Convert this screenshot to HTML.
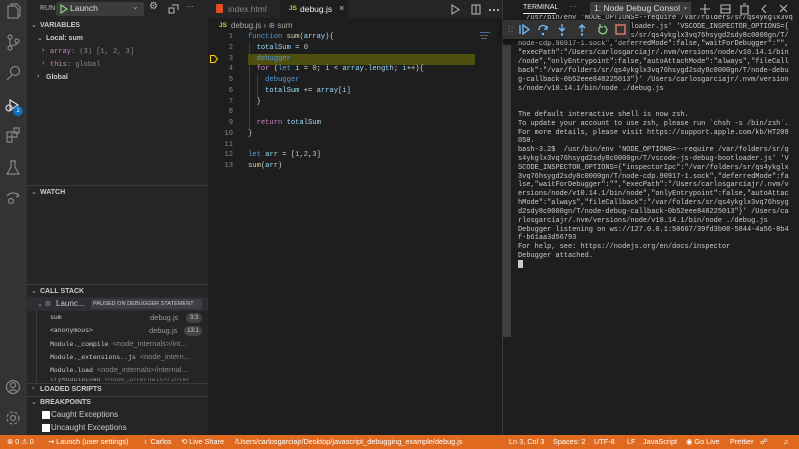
<!DOCTYPE html>
<html><head><meta charset="utf-8">
<style>
*{margin:0;padding:0;box-sizing:border-box}
body{width:799px;height:449px;overflow:hidden;background:#1e1e1e;font-family:"Liberation Sans",sans-serif;color:#ccc;position:relative}
.a{position:absolute;white-space:pre}
.mono{font-family:"Liberation Mono",monospace}
.ico{position:absolute}
.sb span{position:absolute;top:0;white-space:pre}
</style></head><body>
<!-- activity bar -->
<div class="a" style="left:0;top:0;width:27px;height:435px;background:#333"></div>
<svg class="ico" style="left:0;top:0" width="27" height="435" fill="none" stroke="#858585" stroke-width="1.2">
<path d="M8 6h7l3 3v9H8z M11 6V4h6l3 3v9h-2"/>
<circle cx="10" cy="37" r="2"/><circle cx="10" cy="48" r="2"/><circle cx="17" cy="41" r="2"/><path d="M10 39v7 M17 43c0 3-7 2-7 3"/>
<circle cx="15" cy="71" r="4.5"/><path d="M12 75l-5 5"/>
<path d="M10 100l8 5-8 5z" stroke="#ddd"/><circle cx="9" cy="108" r="3" stroke="#ddd"/>
<path d="M7 132h5v5H7z M12 132h5v5h-5z M7 137h5v5H7z M14 128h5v5h-5z"/>
<path d="M11 161v6l-4 7h12l-4-7v-6 M10 161h6"/>
<path d="M7 196c3-4 9-4 12 0l-2-3 M19 196l-3 1"/><circle cx="11" cy="201" r="2.5"/>
<circle cx="13" cy="387" r="6.5"/><circle cx="13" cy="385" r="2.5"/><path d="M9 392c2-3 6-3 8 0"/>
<circle cx="13" cy="418" r="2.5"/><circle cx="13" cy="418" r="6" stroke-dasharray="3 2"/>
</svg>
<div class="a" style="left:13px;top:106px;width:10px;height:10px;border-radius:5px;background:#0e70c0;color:#fff;font-size:6px;text-align:center;line-height:10px">1</div>

<!-- sidebar -->
<div class="a" style="left:27px;top:0;width:181px;height:435px;background:#252526"></div>
<div class="a" style="left:40px;top:5px;font-size:7px;color:#bbb">RUN</div>
<div class="a" style="left:56px;top:2px;width:88px;height:14px;background:#3c3c3c;border-radius:2px"></div>
<svg class="ico" style="left:59px;top:4px" width="9" height="10"><path d="M2 1l6 4-6 4z" fill="none" stroke="#89d185" stroke-width="1.2"/></svg>
<div class="a" style="left:70px;top:3px;font-size:8.5px;color:#ddd">Launch</div>
<div class="a" style="left:132px;top:2px;font-size:8px;color:#aaa">⌄</div>
<div class="a" style="left:149px;top:1px;font-size:10px;color:#bbb">⚙</div>
<svg class="ico" style="left:168px;top:4px" width="11" height="10" fill="none" stroke="#bbb"><path d="M1 4h5v5H1z M4 1h6v5"/></svg>
<div class="a" style="left:186px;top:2px;font-size:8px;color:#bbb">···</div>

<div class="a" style="left:31px;top:21px;font-size:7px;color:#bbb">⌄</div>
<div class="a" style="left:40px;top:22px;font-size:7px;font-weight:bold;color:#ccc">VARIABLES</div>
<div class="a" style="left:37px;top:34px;font-size:7px;color:#bbb">⌄</div>
<div class="a" style="left:46px;top:35px;font-size:7px;font-weight:bold;color:#ccc">Local: sum</div>
<div class="a" style="left:42px;top:47px;font-size:7px;color:#bbb">›</div>
<div class="a mono" style="left:50px;top:48px;font-size:7px;color:#888"><span style="color:#c586c0">array</span>: (3) [1, 2, 3]</div>
<div class="a" style="left:42px;top:60px;font-size:7px;color:#bbb">›</div>
<div class="a mono" style="left:50px;top:61px;font-size:7px;color:#888"><span style="color:#c586c0">this</span>: global</div>
<div class="a" style="left:37px;top:73px;font-size:7px;color:#bbb">›</div>
<div class="a" style="left:46px;top:74px;font-size:7px;font-weight:bold;color:#ccc">Global</div>

<div class="a" style="left:27px;top:185px;width:181px;height:1px;background:#3a3a3a"></div>
<div class="a" style="left:31px;top:188px;font-size:7px;color:#bbb">⌄</div>
<div class="a" style="left:40px;top:189px;font-size:7px;font-weight:bold;color:#ccc">WATCH</div>

<div class="a" style="left:27px;top:284px;width:181px;height:1px;background:#3a3a3a"></div>
<div class="a" style="left:31px;top:287px;font-size:7px;color:#bbb">⌄</div>
<div class="a" style="left:40px;top:288px;font-size:7px;font-weight:bold;color:#ccc">CALL STACK</div>
<div class="a" style="left:27px;top:297px;width:181px;height:14px;background:#2f2f33"></div>
<div class="a" style="left:37px;top:300px;font-size:7px;color:#999">⌄ ⚙</div>
<div class="a" style="left:56px;top:299px;font-size:8px;color:#ccc">Launc...</div>
<div class="a" style="left:91px;top:299px;width:111px;height:10px;background:#3e3e44;font-size:5.6px;color:#ccc;line-height:10px;padding-left:2px">PAUSED ON DEBUGGER STATEMENT</div>
<div class="a" style="left:36px;top:311px;width:1px;height:72px;background:#3a3a3a"></div>
<div class="a mono" style="left:50px;top:314px;font-size:6.5px;color:#ccc">sum</div>
<div class="a" style="left:150px;top:313px;font-size:7.5px;color:#999">debug.js</div>
<div class="a" style="left:186px;top:313px;width:16px;height:10px;border-radius:5px;background:#444;font-size:6px;line-height:10px;text-align:center;color:#ccc">3:3</div>
<div class="a mono" style="left:50px;top:327px;font-size:6.5px;color:#ccc">&lt;anonymous&gt;</div>
<div class="a" style="left:149px;top:326px;font-size:7.5px;color:#999">debug.js</div>
<div class="a" style="left:184px;top:326px;width:18px;height:10px;border-radius:5px;background:#444;font-size:6px;line-height:10px;text-align:center;color:#ccc">13:1</div>
<div class="a mono" style="left:50px;top:339px;font-size:6.5px;color:#ccc">Module._compile <span style="font-family:'Liberation Sans';font-size:7.5px;color:#888">&lt;node_internals&gt;/int...</span></div>
<div class="a mono" style="left:50px;top:352px;font-size:6.5px;color:#ccc">Module._extensions..js <span style="font-family:'Liberation Sans';font-size:7.5px;color:#888">&lt;node_intern...</span></div>
<div class="a mono" style="left:50px;top:365px;font-size:6.5px;color:#ccc">Module.load <span style="font-family:'Liberation Sans';font-size:7.5px;color:#888">&lt;node_internals&gt;/internal...</span></div>
<div class="a" style="left:27px;top:378px;width:181px;height:5px;overflow:hidden"><div class="a mono" style="left:23px;top:-2px;font-size:6.5px;color:#999">tryModuleLoad <span style="color:#777">&lt;node_internals&gt;/inter</span></div></div>
<div class="a" style="left:27px;top:383px;width:181px;height:1px;background:#3a3a3a"></div>
<div class="a" style="left:32px;top:385px;font-size:7px;color:#bbb">›</div>
<div class="a" style="left:40px;top:386px;font-size:7px;font-weight:bold;color:#ccc">LOADED SCRIPTS</div>
<div class="a" style="left:27px;top:396px;width:181px;height:1px;background:#3a3a3a"></div>
<div class="a" style="left:31px;top:398px;font-size:7px;color:#bbb">⌄</div>
<div class="a" style="left:40px;top:399px;font-size:7px;font-weight:bold;color:#ccc">BREAKPOINTS</div>
<div class="a" style="left:42px;top:411px;width:8px;height:8px;background:#fff"></div>
<div class="a" style="left:51px;top:410px;font-size:8px;color:#ccc">Caught Exceptions</div>
<div class="a" style="left:42px;top:424px;width:8px;height:8px;background:#fff"></div>
<div class="a" style="left:51px;top:423px;font-size:8px;color:#ccc">Uncaught Exceptions</div>

<!-- editor -->
<div class="a" style="left:208px;top:0;width:294px;height:18px;background:#252526"></div>
<div class="a" style="left:280px;top:0;width:68px;height:18px;background:#1e1e1e"></div>
<div class="a" style="left:216px;top:4px;width:7px;height:9px;background:#e44d26;border-radius:1px"></div>
<div class="a" style="left:228px;top:4px;font-size:8.5px;color:#888">index.html</div>
<div class="a" style="left:289px;top:5px;font-size:6.5px;font-weight:bold;color:#cbcb41">JS</div>
<div class="a" style="left:300px;top:4px;font-size:8.5px;color:#eee">debug.js</div>
<div class="a" style="left:339px;top:3px;font-size:9px;color:#ccc">×</div>
<svg class="ico" style="left:450px;top:4px" width="50" height="11" fill="none" stroke="#bbb"><path d="M2 1l7 4.5L2 10z M22 1h8v9h-8z M26 1v9"/><circle cx="40" cy="6" r=".6" fill="#bbb"/><circle cx="44" cy="6" r=".6" fill="#bbb"/><circle cx="48" cy="6" r=".6" fill="#bbb"/></svg>
<div class="a" style="left:219px;top:22px;font-size:6.5px;font-weight:bold;color:#cbcb41">JS</div>
<div class="a" style="left:231px;top:21px;font-size:8px;color:#aaa">debug.js › <span style="color:#b180d7">⊕</span> sum</div>

<div class="a" style="left:248px;top:54px;width:227px;height:11px;background:#4f4f10"></div>
<svg class="ico" style="left:209px;top:54px" width="10" height="10"><path d="M1.5 1.5h4l3 3.5-3 3.5h-4z" fill="none" stroke="#ffcc00" stroke-width="1.1"/></svg>
<div class="a" style="left:249px;top:43px;width:1px;height:86px;background:#404040"></div>
<div class="a" style="left:257px;top:75px;width:1px;height:22px;background:#404040"></div>
<div class="a mono" style="left:214px;top:32px;font-size:7.15px;line-height:10.75px;color:#858585;text-align:right;width:19px">1
2
3
4
5
6
7
8
9
10
11
12
13</div>
<div class="a mono" style="left:248px;top:32px;font-size:7.15px;line-height:10.75px;color:#d4d4d4"><span style="color:#569cd6">function</span> <span style="color:#dcdcaa">sum</span>(<span style="color:#9cdcfe">array</span>){
  <span style="color:#9cdcfe">totalSum</span> = <span style="color:#b5cea8">0</span>
  <span style="color:#569cd6">debugger</span>
  <span style="color:#c586c0">for</span> (<span style="color:#569cd6">let</span> <span style="color:#9cdcfe">i</span> = <span style="color:#b5cea8">0</span>; <span style="color:#9cdcfe">i</span> &lt; <span style="color:#9cdcfe">array</span>.<span style="color:#9cdcfe">length</span>; <span style="color:#9cdcfe">i</span>++){
    <span style="color:#569cd6">debugger</span>
    <span style="color:#9cdcfe">totalSum</span> += <span style="color:#9cdcfe">array</span>[<span style="color:#9cdcfe">i</span>]
  }

  <span style="color:#c586c0">return</span> <span style="color:#9cdcfe">totalSum</span>
}

<span style="color:#569cd6">let</span> <span style="color:#9cdcfe">arr</span> = [<span style="color:#b5cea8">1</span>,<span style="color:#b5cea8">2</span>,<span style="color:#b5cea8">3</span>]
<span style="color:#dcdcaa">sum</span>(<span style="color:#9cdcfe">arr</span>)</div>
<div class="a" style="left:480px;top:32px;width:10px;height:1px;background:#4a6a9a"></div>
<div class="a" style="left:480px;top:35px;width:8px;height:1px;background:#666"></div>
<div class="a" style="left:481px;top:38px;width:6px;height:1px;background:#666"></div>

<!-- terminal -->
<div class="a" style="left:502px;top:0;width:297px;height:435px;background:#1e1e1e;border-left:1px solid #3a3a3a;overflow:hidden">
<div class="a" style="left:0;top:45px;width:8px;height:292px;background:#3f3f3f"></div>
<div class="a mono" style="left:15px;top:14px;font-size:6.95px;line-height:8.82px;color:#ccc">  /usr/bin/env 'NODE_OPTIONS=--require /var/folders/sr/qs4ykglx3vq
00gn/T/vscode-js-debug-bootloader.js' 'VSCODE_INSPECTOR_OPTIONS={
"inspectorIpc":"/var/folders/sr/qs4ykglx3vq76hsygd2sdy8c0000gn/T/
node-cdp.90917-1.sock","deferredMode":false,"waitForDebugger":"",
"execPath":"/Users/carlosgarciajr/.nvm/versions/node/v10.14.1/bin
/node","onlyEntrypoint":false,"autoAttachMode":"always","fileCall
back":"/var/folders/sr/qs4ykglx3vq76hsygd2sdy8c0000gn/T/node-debu
g-callback-0b52eee848225013"}' /Users/carlosgarciajr/.nvm/version
s/node/v10.14.1/bin/node ./debug.js


The default interactive shell is now zsh.
To update your account to use zsh, please run `chsh -s /bin/zsh`.
For more details, please visit https://support.apple.com/kb/HT208
050.
bash-3.2$  /usr/bin/env 'NODE_OPTIONS=--require /var/folders/sr/q
s4ykglx3vq76hsygd2sdy8c0000gn/T/vscode-js-debug-bootloader.js' 'V
SCODE_INSPECTOR_OPTIONS={"inspectorIpc":"/var/folders/sr/qs4ykglx
3vq76hsygd2sdy8c0000gn/T/node-cdp.90917-1.sock","deferredMode":fa
lse,"waitForDebugger":"","execPath":"/Users/carlosgarciajr/.nvm/v
ersions/node/v10.14.1/bin/node","onlyEntrypoint":false,"autoAttac
hMode":"always","fileCallback":"/var/folders/sr/qs4ykglx3vq76hsyg
d2sdy8c0000gn/T/node-debug-callback-0b52eee848225013"}' /Users/ca
rlosgarciajr/.nvm/versions/node/v10.14.1/bin/node ./debug.js
Debugger listening on ws://127.0.0.1:50667/39fd3b08-5844-4a56-8b4
f-b61aa3d56793
For help, see: https://nodejs.org/en/docs/inspector
Debugger attached.</div>
<div class="a" style="left:15px;top:260px;width:5px;height:8px;background:#ccc"></div>
</div>
<div class="a" style="left:503px;top:0;width:296px;height:15px;background:#1e1e1e"></div>
<div class="a" style="left:523px;top:4px;font-size:7px;color:#e7e7e7">TERMINAL</div>
<div class="a" style="left:523px;top:13px;width:33px;height:1px;background:#e7e7e7"></div>
<div class="a" style="left:569px;top:2px;font-size:8px;color:#999">···</div>
<div class="a" style="left:590px;top:2px;width:101px;height:13px;background:#3c3c3c"></div>
<div class="a" style="left:594px;top:3px;font-size:8.5px;color:#ddd;width:86px;overflow:hidden">1: Node Debug Console</div>
<div class="a" style="left:682px;top:2px;font-size:8px;color:#bbb">⌄</div>
<svg class="ico" style="left:700px;top:3px" width="92" height="12" fill="none" stroke="#bbb" stroke-width="1.1"><path d="M5 1v10 M0 6h10 M21 2h9v8h-9z M21 6h9 M41 3h7v8h-7z M40 3h9 M43 1h3 M66 2l-4 4 4 4 M80 2l7 7 M87 2l-7 7"/></svg>

<!-- debug toolbar -->
<div class="a" style="left:502px;top:20px;width:128px;height:19px;background:#333;box-shadow:0 2px 6px rgba(0,0,0,.6)"></div>
<svg class="ico" style="left:502px;top:20px" width="128" height="19" fill="none" stroke-width="1.3">
<path d="M7 6v8 M10 6v8" stroke="#666" stroke-dasharray="1 1.5"/>
<path d="M18 5v9 M21 5l6 4.5-6 4.5z" stroke="#75beff"/>
<path d="M37 10a4 4 0 0 1 8-1 M45 6v3h-3" stroke="#75beff"/><circle cx="41" cy="14" r="1.2" fill="#75beff" stroke="none"/>
<path d="M60 4v7 M57 8l3 3 3-3" stroke="#75beff"/><circle cx="60" cy="14.5" r="1.2" fill="#75beff" stroke="none"/>
<path d="M80 12V5 M77 8l3-3 3 3" stroke="#75beff"/><circle cx="80" cy="14.5" r="1.2" fill="#75beff" stroke="none"/>
<path d="M102 6a4 4 0 1 1-4 1 M98 4v3h3" stroke="#89d185"/>
<path d="M114 5h9v9h-9z" stroke="#f48771"/>
</svg>

<!-- status bar -->
<div class="sb" style="position:absolute;left:0;top:435px;width:799px;height:14px;background:#df6a1f;font-size:7.3px;color:#fff;line-height:14px;overflow:hidden"><span style="left:7px">⊗ 0 ⚠ 0</span><span style="left:48px">⇝ Launch (user settings)</span><span style="left:143px">♁ Carlos</span><span style="left:181px">⟲ Live Share</span><span style="left:235px">/Users/carlosgarciajr/Desktop/javascript_debugging_example/debug.js</span><span style="left:509px">Ln 3, Col 3</span><span style="left:553px">Spaces: 2</span><span style="left:594px">UTF-8</span><span style="left:627px">LF</span><span style="left:643px">JavaScript</span><span style="left:686px">◉ Go Live</span><span style="left:730px">Prettier</span><span style="left:760px">☍</span><span style="left:783px">♫</span></div>
</body></html>
